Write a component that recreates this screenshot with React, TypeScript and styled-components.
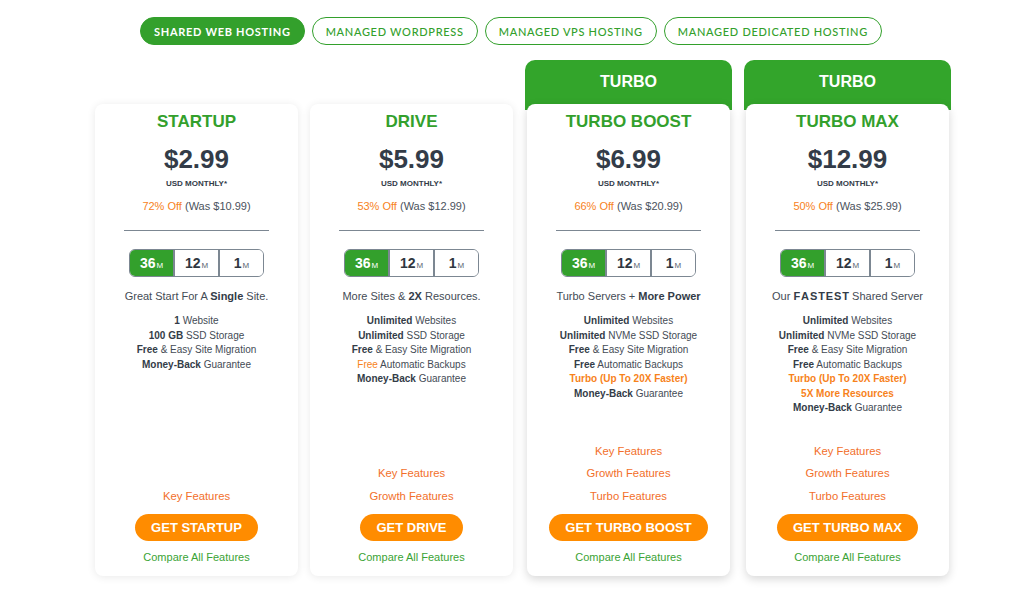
import styled, { createGlobalStyle } from "styled-components";

const GlobalStyle = createGlobalStyle`
  body {
    margin: 0;
    background: #ffffff;
    font-family: "Liberation Sans", Arial, sans-serif;
    color: #444b55;
  }
`;

const Page = styled.div`
  width: 1028px;
  height: 591px;
  padding-top: 17px;
  box-sizing: border-box;
`;

const Tabs = styled.div`
  display: flex;
  gap: 7px;
  padding-left: 140px;
`;

const Tab = styled.div<{ $active?: boolean }>`
  height: 28px;
  box-sizing: border-box;
  border: 1px solid #33a02c;
  border-radius: 14px;
  padding: 0 13px;
  display: flex;
  align-items: center;
  font-family: Lato, "Open Sans", sans-serif;
  font-size: 11px;
  font-weight: ${({ $active }) => ($active ? 700 : 500)};
  letter-spacing: 0.7px;
  color: ${({ $active }) => ($active ? "#ffffff" : "#33a02c")};
  background: ${({ $active }) => ($active ? "#33a02c" : "#ffffff")};
`;

const Grid = styled.div`
  display: grid;
  grid-template-columns: 203px 203px 207px 207px;
  column-gap: 12px;
  align-items: end;
  padding-left: 95px;
  margin-top: 15px;
`;

const Column = styled.div`
  display: flex;
  flex-direction: column;
`;

const TurboHead = styled.div`
  height: 50px;
  background: #33a52b;
  border-radius: 10px 10px 0 0;
  color: #ffffff;
  font-weight: 700;
  font-size: 16px;
  text-align: center;
  line-height: 44px;
`;

const Card = styled.div<{ $turbo?: boolean }>`
  height: 472px;
  box-sizing: border-box;
  background: #ffffff;
  border-radius: 8px;
  margin: ${({ $turbo }) => ($turbo ? "-6px 2px 0" : "0")};
  position: relative;
  box-shadow: ${({ $turbo }) =>
    $turbo ? "0 3px 10px rgba(0,0,0,0.16)" : "0 1px 8px rgba(0,0,0,0.09)"};
  padding: 8px 0 12px;
  display: flex;
  flex-direction: column;
  align-items: center;
  text-align: center;
`;

const Title = styled.div`
  color: #33a02c;
  font-weight: 700;
  font-size: 17px;
  line-height: 20px;
`;

const Price = styled.div`
  margin-top: 12px;
  font-size: 26px;
  font-weight: 700;
  line-height: 30px;
  color: #333c48;
`;

const Period = styled.div`
  margin-top: 5px;
  font-size: 8px;
  font-weight: 700;
  line-height: 10px;
  color: #333c48;
`;

const Discount = styled.div`
  margin-top: 10px;
  font-size: 11px;
  line-height: 14px;
  color: #4a525c;
  span {
    color: #f7821b;
  }
`;

const Divider = styled.div`
  margin-top: 17px;
  width: 145px;
  height: 1px;
  background: #7c8792;
`;

const Terms = styled.div`
  margin-top: 18px;
  display: flex;
  border: 1px solid #7c8792;
  border-radius: 6px;
  overflow: hidden;
  height: 28px;
  box-sizing: border-box;
`;

const Term = styled.div<{ $active?: boolean }>`
  width: 43px;
  display: flex;
  align-items: center;
  justify-content: center;
  font-size: 14px;
  font-weight: 700;
  color: ${({ $active }) => ($active ? "#ffffff" : "#2f3740")};
  background: ${({ $active }) => ($active ? "#33a02c" : "#ffffff")};
  & + & {
    border-left: 2px solid #7c8792;
  }
  small {
    font-size: 8px;
    font-weight: 400;
    margin-left: 1px;
    margin-top: 4px;
    color: ${({ $active }) => ($active ? "#ffffff" : "#5a6470")};
  }
`;

const Desc = styled.div`
  margin-top: 12px;
  font-size: 11px;
  line-height: 14px;
  color: #444b55;
  b {
    color: #333c48;
  }
`;

const Features = styled.div`
  margin-top: 11px;
  font-size: 10px;
  line-height: 14.5px;
  color: #444b55;
`;

const Seg = styled.span<{ $bold?: boolean; $orange?: boolean }>`
  font-weight: ${({ $bold }) => ($bold ? 700 : 400)};
  color: ${({ $orange, $bold }) => ($orange ? "#f7821b" : $bold ? "#333c48" : "inherit")};
`;

const Links = styled.div`
  margin-top: auto;
  display: flex;
  flex-direction: column;
`;

const LinkText = styled.div`
  font-size: 11.3px;
  line-height: 22.5px;
  color: #f26f2b;
`;

const Button = styled.div`
  margin-top: 7px;
  height: 27px;
  padding: 0 16px;
  border-radius: 14px;
  background: #ff8c00;
  color: #ffffff;
  font-weight: 700;
  font-size: 13px;
  display: flex;
  align-items: center;
`;

const Compare = styled.div`
  margin-top: 9px;
  font-size: 11px;
  line-height: 14px;
  color: #3aa335;
`;

type Part = [string, "b" | "o" | "bo" | "n"];

interface Plan {
  name: string;
  turbo?: boolean;
  price: string;
  off: string;
  was: string;
  desc: Part[];
  features: Part[][];
  links: string[];
}

const plans: Plan[] = [
  {
    name: "STARTUP",
    price: "$2.99",
    off: "72% Off",
    was: "(Was $10.99)",
    desc: [["Great Start For A ", "n"], ["Single", "b"], [" Site.", "n"]],
    features: [
      [["1", "b"], [" Website", "n"]],
      [["100 GB", "b"], [" SSD Storage", "n"]],
      [["Free", "b"], [" & Easy Site Migration", "n"]],
      [["Money-Back", "b"], [" Guarantee", "n"]],
    ],
    links: ["Key Features"],
  },
  {
    name: "DRIVE",
    price: "$5.99",
    off: "53% Off",
    was: "(Was $12.99)",
    desc: [["More Sites & ", "n"], ["2X", "b"], [" Resources.", "n"]],
    features: [
      [["Unlimited", "b"], [" Websites", "n"]],
      [["Unlimited", "b"], [" SSD Storage", "n"]],
      [["Free", "b"], [" & Easy Site Migration", "n"]],
      [["Free", "o"], [" Automatic Backups", "n"]],
      [["Money-Back", "b"], [" Guarantee", "n"]],
    ],
    links: ["Key Features", "Growth Features"],
  },
  {
    name: "TURBO BOOST",
    turbo: true,
    price: "$6.99",
    off: "66% Off",
    was: "(Was $20.99)",
    desc: [["Turbo Servers + ", "n"], ["More Power", "b"]],
    features: [
      [["Unlimited", "b"], [" Websites", "n"]],
      [["Unlimited", "b"], [" NVMe SSD Storage", "n"]],
      [["Free", "b"], [" & Easy Site Migration", "n"]],
      [["Free", "b"], [" Automatic Backups", "n"]],
      [["Turbo (Up To 20X Faster)", "bo"]],
      [["Money-Back", "b"], [" Guarantee", "n"]],
    ],
    links: ["Key Features", "Growth Features", "Turbo Features"],
  },
  {
    name: "TURBO MAX",
    turbo: true,
    price: "$12.99",
    off: "50% Off",
    was: "(Was $25.99)",
    desc: [["Our ", "n"], ["F\u200AA\u200AS\u200AT\u200AE\u200AS\u200AT", "b"], [" Shared Server", "n"]],
    features: [
      [["Unlimited", "b"], [" Websites", "n"]],
      [["Unlimited", "b"], [" NVMe SSD Storage", "n"]],
      [["Free", "b"], [" & Easy Site Migration", "n"]],
      [["Free", "b"], [" Automatic Backups", "n"]],
      [["Turbo (Up To 20X Faster)", "bo"]],
      [["5X More Resources", "bo"]],
      [["Money-Back", "b"], [" Guarantee", "n"]],
    ],
    links: ["Key Features", "Growth Features", "Turbo Features"],
  },
];

const renderParts = (parts: Part[]) =>
  parts.map(([text, kind], i) => (
    <Seg key={i} $bold={kind === "b" || kind === "bo"} $orange={kind === "o" || kind === "bo"}>
      {text}
    </Seg>
  ));

function PlanCard({ plan }: { plan: Plan }) {
  return (
    <Card $turbo={plan.turbo}>
      <Title>{plan.name}</Title>
      <Price>{plan.price}</Price>
      <Period>USD MONTHLY*</Period>
      <Discount>
        <span>{plan.off}</span> {plan.was}
      </Discount>
      <Divider />
      <Terms>
        <Term $active>
          36<small>M</small>
        </Term>
        <Term>
          12<small>M</small>
        </Term>
        <Term>
          1<small>M</small>
        </Term>
      </Terms>
      <Desc>{renderParts(plan.desc)}</Desc>
      <Features>
        {plan.features.map((f, i) => (
          <div key={i}>{renderParts(f)}</div>
        ))}
      </Features>
      <Links>
        {plan.links.map((l) => (
          <LinkText key={l}>{l}</LinkText>
        ))}
      </Links>
      <Button>GET {plan.name}</Button>
      <Compare>Compare All Features</Compare>
    </Card>
  );
}

export default function App() {
  return (
    <Page>
      <GlobalStyle />
      <Tabs>
        <Tab $active>SHARED WEB HOSTING</Tab>
        <Tab>MANAGED WORDPRESS</Tab>
        <Tab>MANAGED VPS HOSTING</Tab>
        <Tab>MANAGED DEDICATED HOSTING</Tab>
      </Tabs>
      <Grid>
        {plans.map((p) => (
          <Column key={p.name}>
            {p.turbo && <TurboHead>TURBO</TurboHead>}
            <PlanCard plan={p} />
          </Column>
        ))}
      </Grid>
    </Page>
  );
}
